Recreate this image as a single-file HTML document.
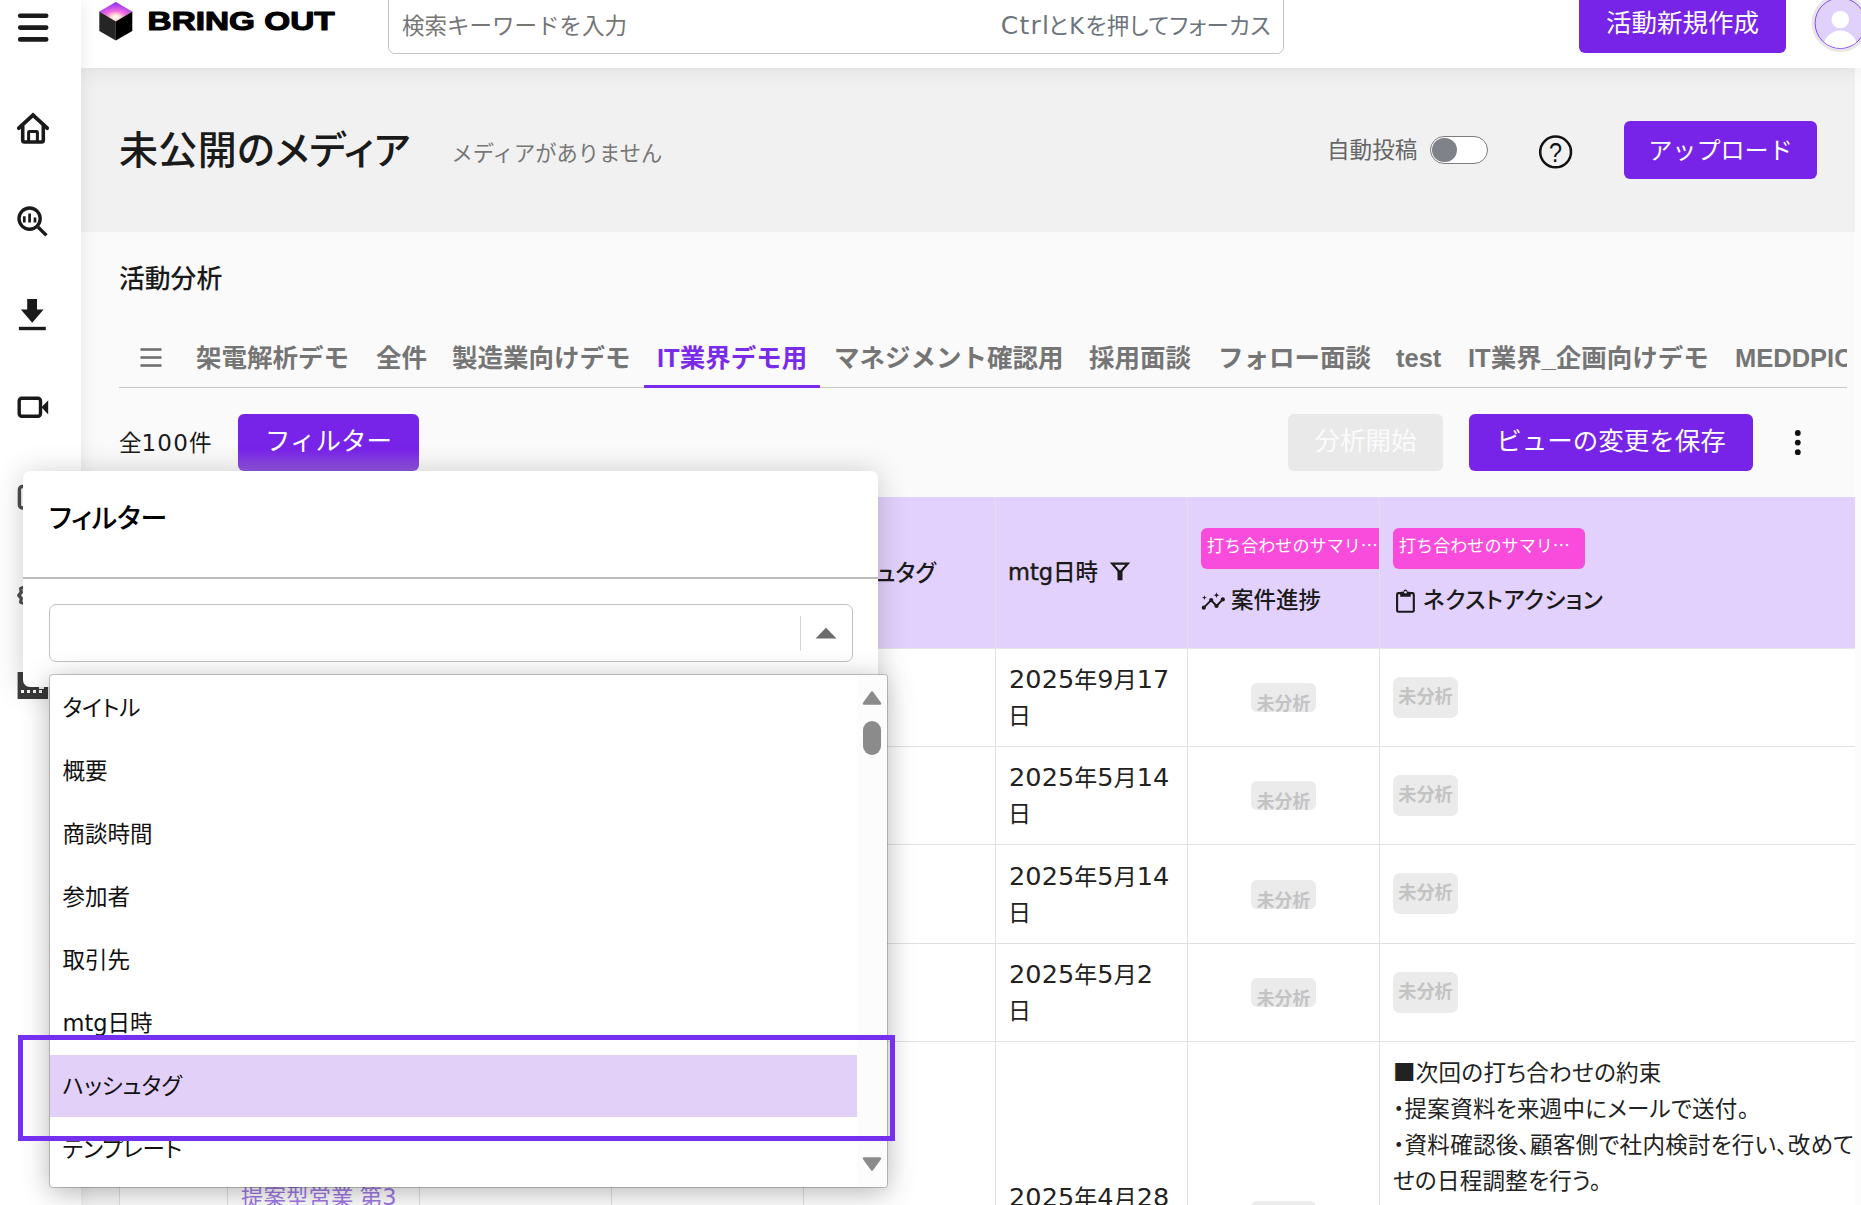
<!DOCTYPE html>
<html lang="ja">
<head>
<meta charset="utf-8">
<title>BRING OUT</title>
<style>
*{box-sizing:border-box;margin:0;padding:0}
html,body{width:1861px;height:1205px;overflow:hidden;background:#fafafa}
body{position:relative;font-family:"Liberation Sans","Noto Sans CJK JP",sans-serif;color:#1a1a1a;font-size:24px;-webkit-font-smoothing:antialiased}
.abs{position:absolute}
.w{font-family:"DejaVu Sans","Liberation Sans","Noto Sans CJK JP",sans-serif}
.t{position:absolute;white-space:nowrap;line-height:1}
/* top bar */
#top{position:absolute;left:81px;top:0;width:1780px;height:68px;background:#fff;box-shadow:0 1px 22px rgba(0,0,0,.095);z-index:3}
#side{position:absolute;left:0;top:0;width:81px;height:1205px;background:#fff;z-index:4;box-shadow:0 0 18px rgba(0,0,0,.09)}
#gray{position:absolute;left:81px;top:68px;width:1774px;height:164px;background:#f1f1f1;z-index:1}
.btn{position:absolute;background:#7823e8;color:#fff;border-radius:6px;text-align:center;white-space:nowrap}
#search{position:absolute;left:307px;top:-6px;width:896px;height:60px;border:1px solid #c4c4c4;border-radius:7px;background:#fff}
/* tabs */
.tab{position:absolute;top:340px;height:36px;line-height:36px;font-size:25.5px;font-weight:700;color:#757575;white-space:nowrap}
/* table */
#tbl{position:absolute;left:119px;top:497px;width:1736px;height:708px;overflow:hidden;background:#fff;z-index:1}
#thead{position:absolute;left:0;top:0;width:1736px;height:151px;background:#e2d1fc}
.vl{position:absolute;top:0;width:1px;height:708px;background:#e1e1e1}
.hl{position:absolute;left:0;width:1736px;height:1px;background:#e1e1e1}
.date{position:absolute;left:889px;font-size:23px;line-height:36px;color:#222;white-space:nowrap;margin-top:1px}
.date .w{font-size:25.500px;letter-spacing:.1px;line-height:1}
.date .w:first-child{margin-left:1px}
.chipA{position:absolute;left:1132px;width:65px;height:29px;background:#ebebeb;border-radius:6px;overflow:hidden}
.chipA span{position:absolute;left:0;width:65px;top:9px;text-align:center;font-size:17.800px;line-height:24px;font-weight:700;color:#c3c3c3}
.chipB{position:absolute;left:1274px;width:65px;height:41px;background:#ebebeb;border-radius:7px;text-align:center;font-size:18.200px;line-height:41.500px;font-weight:700;color:#c3c3c3}
.tag{position:absolute;top:31px;height:41px;background:#f94bdc;border-radius:6px;color:#fff;font-size:17.100px;line-height:38px;padding-left:6px;white-space:nowrap;overflow:hidden}
.hd{font-size:22.5px;line-height:28px;font-weight:500;color:#1a1a1a;font-feature-settings:"palt"}
.body{font-size:22.5px;line-height:36px;color:#222;font-feature-settings:"palt";letter-spacing:.3px;margin-top:1.5px}
.cj{font-family:"Noto Sans CJK JP",sans-serif;line-height:1}
.opt{font-feature-settings:"palt"}
/* popover */
#pop{position:absolute;left:23px;top:471px;width:855px;height:216px;background:#fff;border-radius:7px;box-shadow:0 2px 30px rgba(0,0,0,.2);z-index:10}
#menu{position:absolute;left:50px;top:675px;width:837px;height:512px;background:#fff;border-radius:3px;box-shadow:0 0 0 1px rgba(0,0,0,.2),0 5px 28px rgba(0,0,0,.3);z-index:11;overflow:hidden}
.opt{position:absolute;left:0;width:807px;height:62px;padding-left:12.500px;font-size:22.5px;line-height:63px;color:#111;white-space:nowrap}
#hlbox{position:absolute;left:18px;top:1035px;width:877px;height:106px;border:5px solid #7430ee;z-index:12}
</style>
</head>
<body>

<!-- SIDEBAR -->
<div id="side">
<svg class="abs" style="left:0;top:0" width="81" height="720" viewBox="0 0 81 720">
  <g stroke="#1a1a1a" stroke-width="4.6" stroke-linecap="round" fill="none">
    <path d="M20.2 15.8H46.2M20.2 27.6H46.2M20.2 39.4H46.2"/>
  </g>
  <!-- home -->
  <g stroke="#1a1a1a" fill="none" stroke-linejoin="round" stroke-linecap="round">
    <path d="M18.8 128.2L33 115 47.2 128.2" stroke-width="3.8" stroke-linejoin="miter"/>
    <path d="M22.7 126V140.2Q22.7 142 24.5 142H41.5Q43.3 142 43.3 140.2V126" stroke-width="3.6"/>
    <path d="M28.6 141.5V132.2Q28.6 131.6 29.2 131.6H36.8Q37.4 131.6 37.4 132.2V141.5" stroke-width="3"/>
  </g>
  <!-- search chart -->
  <g stroke="#1a1a1a" fill="none" stroke-linecap="round">
    <circle cx="29.6" cy="218.6" r="10.6" stroke-width="3.4"/>
    <path d="M38.2 227.2L46.4 235.4" stroke-width="3.4" stroke-linecap="butt"/>
    <path d="M24.3 216.2V222.6M29.6 213.6V222.6M35 217.6V222.6" stroke-width="2.7" stroke-linecap="butt"/>
  </g>
  <!-- download -->
  <path d="M27.2 299H37V309.6H43.6L32.2 322.8 20.9 309.6H27.2Z" fill="#1a1a1a"/>
  <rect x="18.9" y="326.8" width="26.9" height="3.4" fill="#1a1a1a"/>
  <!-- video -->
  <rect x="19.2" y="398.2" width="21.3" height="18" rx="2.6" fill="none" stroke="#1a1a1a" stroke-width="3.4"/>
  <path d="M41.5 407.2L48.2 400.2V414.4Z" fill="#1a1a1a"/>
  <!-- partly hidden icons -->
  <rect x="19.4" y="486.5" width="26" height="21.5" rx="3" fill="none" stroke="#4d4d4d" stroke-width="3.4"/>
  <g fill="none" stroke="#4d4d4d" stroke-width="3.2">
    <circle cx="32.5" cy="592.5" r="5"/>
    <path d="M32.5 581.5l3 2.6 3.9-.7 1.3 3.7 3.7 1.4-.7 3.9 2.6 3-2.6 3 .7 3.9-3.7 1.3-1.3 3.7-3.9-.7-3 2.6-3-2.6-3.9.7-1.300-3.700-3.700-1.300.7-3.900-2.600-3 2.600-3-.7-3.900 3.700-1.400 1.300-3.700 3.900.7z" stroke-linejoin="round"/>
  </g>
  <path d="M17.600 672H23V680H48V699H17.600Z" fill="#3d3d3d"/>
  <g fill="#fff"><rect x="21" y="690" width="3" height="3"/><rect x="27" y="690" width="3" height="3"/><rect x="33" y="690" width="3" height="3"/><rect x="39" y="684" width="5" height="5"/><rect x="39" y="690" width="3" height="3"/></g>
</svg>
</div>

<!-- TOP BAR -->
<div id="top">
  <svg class="abs" style="left:14px;top:0" width="250" height="46" viewBox="0 0 250 46">
    <defs>
      <radialGradient id="lg" cx="0.5" cy="0.78" r="0.75">
        <stop offset="0" stop-color="#fff"/><stop offset="0.16" stop-color="#ffe3d6"/><stop offset="0.42" stop-color="#f36dde"/><stop offset="1" stop-color="#8d2cf5"/>
      </radialGradient>
    </defs>
    <path d="M4.300 11.500L20.800 2 37.300 11.500 20.800 21.500Z" fill="url(#lg)"/>
    <path d="M4.300 11.500L20.800 21.500V40.600L4.300 31Z" fill="#252525"/>
    <path d="M37.300 11.500L20.800 21.500V40.600L37.300 31Z" fill="#000"/>
    <text x="52.600" y="30.100" font-family="'Liberation Sans',sans-serif" font-weight="700" font-size="25.500" textLength="187" lengthAdjust="spacingAndGlyphs" fill="#000" stroke="#000" stroke-width="1.1" stroke-linejoin="round">BRING OUT</text>
  </svg>
  <div id="search">
    <div class="t" style="left:13px;top:21px;font-size:22.500px;color:#757575">検索キーワードを入力</div>
    <div class="t" style="right:12px;top:18.400px;font-size:22.500px;letter-spacing:.4px;color:#6c757d;font-feature-settings:'palt'"><span class="w" style="font-size:25px;letter-spacing:1.200px;margin-right:-2px">Ctrl</span>と<span class="w" style="margin:0 1px">K</span>を押してフォーカス</div>
  </div>
  <div class="btn" style="left:1498px;top:-8px;width:207px;height:61px;font-size:25.500px;line-height:63px">活動新規作成</div>
  <svg class="abs" style="left:1728px;top:-8px" width="60" height="62" viewBox="1809 -8 60 62">
    <circle cx="1840.300" cy="23.200" r="27" fill="#e0d0fc" stroke="#e7e7e7" stroke-width="3.400"/>
    <circle cx="1840.300" cy="23.200" r="25.200" fill="none" stroke="#7c3aed" stroke-width="0.9"/>
    <clipPath id="avc"><circle cx="1840.300" cy="23.200" r="24.800"/></clipPath>
    <g clip-path="url(#avc)" fill="#fff">
      <circle cx="1840.300" cy="19.500" r="8.800"/>
      <ellipse cx="1840.300" cy="49" rx="17.500" ry="18.400"/>
    </g>
  </svg>
</div>

<!-- GRAY SECTION -->
<div id="gray">
  <div class="t" style="left:38px;top:61px;font-size:39px;line-height:44px;letter-spacing:.35px;font-weight:500;color:#1a1a1a;font-feature-settings:'palt'">未公開のメディア</div>
  <div class="t" style="left:370.500px;top:74px;font-size:21.300px;line-height:24px;color:#777">メディアがありません</div>
  <div class="t" style="left:1246px;top:70px;font-size:22.600px;line-height:26px;color:#666">自動投稿</div>
  <div class="abs" style="left:1349px;top:67.700px;width:57.500px;height:28.500px;border:1.300px solid #7d7d7d;border-radius:15px;background:#fff"></div>
  <div class="abs" style="left:1351.200px;top:69.700px;width:24.600px;height:24.600px;border-radius:13px;background:#7f8389"></div>
  <svg class="abs" style="left:1455px;top:64px" width="40" height="40" viewBox="0 0 40 40">
    <circle cx="19.600" cy="19.900" r="15.400" fill="none" stroke="#111" stroke-width="2.500"/>
    <text x="19.600" y="29.800" transform="translate(19.600 0) scale(.85 1) translate(-19.600 0)" text-anchor="middle" font-family="'Liberation Sans',sans-serif" font-size="27.500" fill="#111">?</text>
  </svg>
  <div class="btn" style="left:1543px;top:53px;width:193px;height:58px;font-size:24.100px;line-height:60px">アップロード</div>
</div>

<div class="abs" style="left:1855px;top:68px;width:6px;height:1137px;background:#fcfcfc;z-index:2"></div>
<!-- MAIN -->
<div class="t" style="left:119px;top:264px;font-size:25.800px;line-height:30px;font-weight:500;color:#1a1a1a">活動分析</div>

<div class="abs" style="left:119px;top:330px;width:1728px;height:58px;overflow:hidden">
  <div class="abs" style="left:0;top:57px;width:1728px;height:1px;background:#c9c9c9"></div>
  <div class="abs" style="left:525px;top:54.500px;width:176px;height:3px;background:#7a2bea"></div>
</div>
<div class="abs" style="left:0;top:0;width:1847px;height:400px;overflow:hidden">
  <svg class="abs" style="left:140px;top:347px" width="24" height="22" viewBox="0 0 24 22"><path d="M0.500 2.500H21.500M0.500 10.500H21.500M0.500 18.500H21.500" stroke="#6b6b6b" stroke-width="2.600"/></svg>
  <div class="tab" style="left:196px">架電解析デモ</div>
  <div class="tab" style="left:376px">全件</div>
  <div class="tab" style="left:452px">製造業向けデモ</div>
  <div class="tab" style="left:657px;color:#7a2bea">IT業界デモ用</div>
  <div class="tab" style="left:834px">マネジメント確認用</div>
  <div class="tab" style="left:1089px">採用面談</div>
  <div class="tab" style="left:1218px">フォロー面談</div>
  <div class="tab" style="left:1396px">test</div>
  <div class="tab" style="left:1468px">IT業界_企画向けデモ</div>
  <div class="tab" style="left:1735px">MEDDPICC</div>
</div>

<div class="t" style="left:119px;top:429px;font-size:22.5px;line-height:28px;color:#1a1a1a">全<span class="w" style="font-size:23px;letter-spacing:1.2px">100</span>件</div>
<div class="btn" style="left:238px;top:414px;width:181px;height:57px;font-size:25.5px;line-height:54px;background:linear-gradient(#7823e8 0,#7823e8 62%,#9256e1 100%)">フィルター</div>
<div class="btn" style="left:1288px;top:414px;width:155px;height:57px;font-size:25.5px;line-height:55px;background:#e9e9e9;color:#fbfbfb">分析開始</div>
<div class="btn" style="left:1469px;top:414px;width:284px;height:57px;font-size:25.5px;line-height:55px">ビューの変更を保存</div>
<svg class="abs" style="left:1790px;top:426px" width="16" height="34" viewBox="0 0 16 34"><g fill="#111"><circle cx="7.800" cy="7" r="2.900"/><circle cx="7.800" cy="16.600" r="2.900"/><circle cx="7.800" cy="26.200" r="2.900"/></g></svg>

<!-- TABLE -->
<div id="tbl">
  <div id="thead"></div>
  <div class="hl" style="top:151px;background:#e6e6e6"></div>
  <div class="vl" style="left:0px"></div>
  <div class="vl" style="left:108px"></div>
  <div class="vl" style="left:300px"></div>
  <div class="vl" style="left:492px"></div>
  <div class="vl" style="left:684px"></div>
  <div class="vl" style="left:876px"></div>
  <div class="vl" style="left:1068px"></div>
  <div class="vl" style="left:1260px"></div>
  <div class="hl" style="top:249px"></div>
  <div class="hl" style="top:347px"></div>
  <div class="hl" style="top:446px"></div>
  <div class="hl" style="top:544px"></div>
  <div class="t hd" style="left:697.5px;top:62.500px">ハッシュタグ</div>
  <div class="t hd" style="left:889px;top:61px"><span class="w" style="font-size:22.5px;-webkit-text-stroke:.45px #1a1a1a">mtg</span>日時</div>
  <svg class="abs" style="left:990px;top:64px" width="22" height="22" viewBox="0 0 22 22"><path d="M3.300 2.700H18.700L11 11.600Z" fill="none" stroke="#1a1a1a" stroke-width="2.300" stroke-linejoin="miter"/><rect x="8.500" y="9.600" width="5" height="9.700" fill="#1a1a1a"/></svg>
  <div class="abs" style="left:1069px;top:0;width:191px;height:151px;overflow:hidden"><div class="tag" style="left:13px;width:192px">打ち合わせのサマリ<span class="cj">…</span></div></div>
  <div class="tag" style="left:1274px;width:192px">打ち合わせのサマリ<span class="cj">…</span></div>
  <svg class="abs" style="left:1081px;top:93px" width="27" height="22" viewBox="0 0 27 22"><path d="M3.800 17.700L11.200 10.100 16.500 16 22.800 9.400" fill="none" stroke="#1a1a1a" stroke-width="1.900" stroke-linejoin="round"/><g fill="#1a1a1a"><circle cx="3.800" cy="17.700" r="2.100"/><circle cx="11.200" cy="10.100" r="2.100"/><circle cx="16.500" cy="16" r="2.100"/><circle cx="22.800" cy="9.400" r="2.100"/><path d="M16.5 1.8000000000000003Q16.5 5.2 19.9 5.2Q16.5 5.2 16.5 8.6Q16.5 5.2 13.1 5.2Q16.5 5.2 16.5 1.8000000000000003ZM4.4 5.300000000000001Q4.4 7.7 6.800000000000001 7.7Q4.4 7.7 4.4 10.1Q4.4 7.7 2.0000000000000004 7.7Q4.4 7.7 4.4 5.300000000000001Z"/></g></svg>
  <div class="t hd" style="left:1112px;top:89.500px">案件進捗</div>
  <svg class="abs" style="left:1275px;top:91px" width="24" height="27" viewBox="0 0 24 27"><rect x="3.100" y="5.100" width="16.700" height="18.700" rx="1.300" fill="none" stroke="#1a1a1a" stroke-width="2.100"/><path d="M6.200 8.700V4.600Q6.200 3.700 7.100 3.700H9.300Q9.800 1.600 11.450 1.600T13.600 3.700H15.800Q16.700 3.700 16.700 4.600V8.700Z" fill="#1a1a1a"/><circle cx="11.450" cy="4.300" r="1.250" fill="#e2d1fc"/></svg>
  <div class="t hd" style="left:1304px;top:89.500px;letter-spacing:.45px">ネクストアクション</div>
  <div class="date" style="top:164.3px"><span class="w">2025</span>年<span class="w">9</span>月<span class="w">17</span><br>日</div>
  <div class="chipA" style="top:186.1px"><span>未分析</span></div>
  <div class="chipB" style="top:179.8px">未分析</div>
  <div class="date" style="top:262.3px"><span class="w">2025</span>年<span class="w">5</span>月<span class="w">14</span><br>日</div>
  <div class="chipA" style="top:284.1px"><span>未分析</span></div>
  <div class="chipB" style="top:277.8px">未分析</div>
  <div class="date" style="top:360.8px"><span class="w">2025</span>年<span class="w">5</span>月<span class="w">14</span><br>日</div>
  <div class="chipA" style="top:382.6px"><span>未分析</span></div>
  <div class="chipB" style="top:376.3px">未分析</div>
  <div class="date" style="top:459.3px"><span class="w">2025</span>年<span class="w">5</span>月<span class="w">2</span><br>日</div>
  <div class="chipA" style="top:481.1px"><span>未分析</span></div>
  <div class="chipB" style="top:474.8px">未分析</div>
  <div class="date" style="top:682.0px"><span class="w">2025</span>年<span class="w">4</span>月<span class="w">28</span><br>日</div>
  <div class="chipA" style="top:703.8px"><span>未分析</span></div>
  <div class="t" style="left:122px;top:682.0px;font-size:22.5px;line-height:36px;color:#a07ae6;font-feature-settings:'palt'">提案型営業 第<span class="w">3</span></div>
  <div class="t body" style="left:1274px;top:557px"><span class="cj" style="line-height:1">■</span>次回の打ち合わせの約束</div>
  <div class="t body" style="left:1274px;top:593px">・提案資料を来週中にメールで送付。</div>
  <div class="t body" style="left:1274px;top:629px">・資料確認後、顧客側で社内検討を行い、改めて打ち合わ</div>
  <div class="t body" style="left:1274px;top:665px">せの日程調整を行う。</div>
</div>

<!-- POPOVER -->
<div id="pop">
  <div class="t" style="left:26px;top:29.500px;font-size:27px;line-height:36px;color:#000;font-weight:500;font-feature-settings:'palt'">フィルター</div>
  <div class="abs" style="left:0;top:106px;width:855px;height:2px;background:#bdbdbd"></div>
  <div class="abs" style="left:26px;top:133px;width:804px;height:58px;border:1px solid #c2c2c2;border-radius:7px;background:#fff"></div>
  <div class="abs" style="left:776.500px;top:145px;width:1.500px;height:35px;background:#d4d4d4"></div>
  <svg class="abs" style="left:792px;top:156px" width="22" height="12" viewBox="0 0 22 12"><path d="M0.500 11.500L11 0.800 21.500 11.500Z" fill="#6b6b6b"/></svg>
</div>
<div id="menu">
  <div class="opt" style="top:2px">タイトル</div>
  <div class="opt" style="top:65px">概要</div>
  <div class="opt" style="top:128px">商談時間</div>
  <div class="opt" style="top:191px">参加者</div>
  <div class="opt" style="top:254px">取引先</div>
  <div class="opt" style="top:317px"><span class="w" style="font-size:22.5px">mtg</span>日時</div>
  <div class="opt" style="top:380px;background:#e2d0f9">ハッシュタグ</div>
  <div class="opt" style="top:443px">テンプレート</div>
  <div class="abs" style="left:807px;top:0;width:30px;height:512px;background:#fcfcfc"></div>
  <svg class="abs" style="left:807px;top:0" width="30" height="512" viewBox="857 675 30 512"><g fill="#8b8b8b"><path d="M872 692.500L880 703.500H864Z" stroke="#8b8b8b" stroke-width="2.500" stroke-linejoin="round"/><rect x="863" y="721" width="18" height="34" rx="9"/><path d="M872 1169.500L880 1158.500H864Z" stroke="#8b8b8b" stroke-width="2.500" stroke-linejoin="round"/></g></svg>
</div>
<div id="hlbox"></div>

</body>
</html>
